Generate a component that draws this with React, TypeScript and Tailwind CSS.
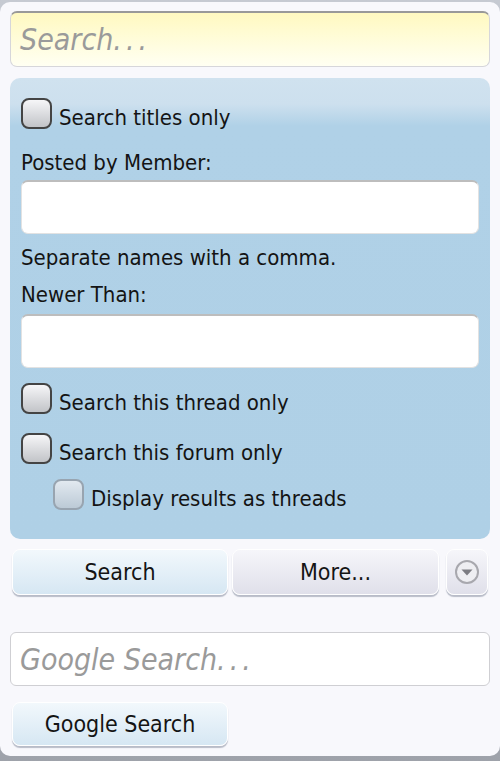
import React from "react";

const Checkbox = ({ sub = false }: { sub?: boolean }) => (
  <span
    className={
      sub
        ? "block w-[31px] h-[31px] shrink-0 rounded-[8px] border-2 border-[#98a4b0] bg-gradient-to-b from-[#e2e9f0] to-[#bccad6]"
        : "block w-[31px] h-[31px] shrink-0 rounded-[8px] border-2 border-[#444] bg-gradient-to-b from-[#f6f6f8] to-[#c2c4c8]"
    }
  />
);

const CheckRow = ({ label, className = "" }: { label: string; className?: string }) => (
  <label className={"flex items-start gap-[7px] " + className}>
    <Checkbox />
    <span className="mt-[8px] leading-[24px]">{label}</span>
  </label>
);

// text box with a faded hint, the dots are spaced wider than the font gives
const HintBox = ({ hint, className }: { hint: string; className: string }) => (
  <div className={"flex items-center px-[9px] text-[30px] italic text-[#9a9a9a] " + className}>
    <span>{hint}</span>
    <span className="tracking-[4px]">...</span>
  </div>
);

export default function App() {
  return (
    <div className="h-[761px] w-[500px] overflow-hidden bg-gradient-to-b from-[#c6cad2] to-[#9ea2aa] pt-[2px] font-['DejaVu_Sans_Condensed','DejaVu_Sans',sans-serif] font-stretch-condensed text-[22px] text-[#141414]">
      <div className="h-[754px] rounded-[10px] bg-[#f8f8fc] px-[10px] pt-[9px]">
        <HintBox
          hint="Search"
          className="h-[56px] rounded-[7px] border border-[#d6d6da] border-t-2 border-t-[#999] bg-gradient-to-b from-[#fff9c0] to-[#fffff2]"
        />

        <div className="mt-[11px] rounded-[10px] bg-[linear-gradient(180deg,#d0e2ef_0px,#cde0ee_26px,#b0d1e7_48px,#afd0e6_100%)] px-[11px] pt-[20px] pb-[28px]">
          <CheckRow label="Search titles only" />

          <div className="mt-[21px] leading-[24px]">Posted by Member:</div>
          <input
            type="text"
            className="mt-[5px] block h-[54px] w-full rounded-[7px] border border-[#e2e2e2] border-t-2 border-t-[#bdbdbd] bg-white outline-none"
          />

          <div className="mt-[12px] leading-[24px]">Separate names with a comma.</div>
          <div className="mt-[13px] leading-[24px]">Newer Than:</div>
          <input
            type="text"
            className="mt-[7px] block h-[54px] w-full rounded-[7px] border border-[#e2e2e2] border-t-2 border-t-[#bdbdbd] bg-white outline-none"
          />

          <CheckRow label="Search this thread only" className="mt-[15px]" />
          <CheckRow label="Search this forum only" className="mt-[18px]" />

          <label className="mt-[14px] ml-[32px] flex items-start gap-[7px]">
            <Checkbox sub />
            <span className="mt-[8px] leading-[24px]">Display results as threads</span>
          </label>
        </div>

        <div className="mt-[10px] flex items-center gap-[4px] pl-[2px]">
          <button className="h-[46px] w-[216px] rounded-[8px] border border-white bg-gradient-to-b from-[#f2f8fc] to-[#d6e7f3] text-[23px] shadow-[0_2px_1px_#b8bcc8]">
            Search
          </button>
          <button className="h-[46px] w-[207px] rounded-[8px] border border-white bg-gradient-to-b from-[#f6f6fa] to-[#e0e0ea] text-[23px] shadow-[0_2px_1px_#b8bcc8]">
            More...
          </button>
          <button className="ml-[3px] flex h-[46px] w-[42px] items-center justify-center rounded-[8px] border border-white bg-gradient-to-b from-[#f6f6fa] to-[#e0e0ea] shadow-[0_2px_1px_#b8bcc8]">
            <svg width="26" height="26" viewBox="0 0 26 26">
              <circle cx="13" cy="13" r="11" fill="#eeeef2" stroke="#a8a8ae" strokeWidth="2" />
              <path d="M7.5 10.5 L18.5 10.5 L13 16.5 Z" fill="#7c7c82" />
            </svg>
          </button>
        </div>

        <HintBox
          hint="Google Search"
          className="mt-[37px] h-[54px] rounded-[6px] border border-[#cfcfd3] bg-white"
        />

        <button className="mt-[16px] ml-[2px] h-[44px] w-[216px] rounded-[8px] border border-white bg-gradient-to-b from-[#f2f8fc] to-[#d6e7f3] text-[23px] shadow-[0_2px_1px_#b8bcc8]">
          Google Search
        </button>
      </div>
    </div>
  );
}
